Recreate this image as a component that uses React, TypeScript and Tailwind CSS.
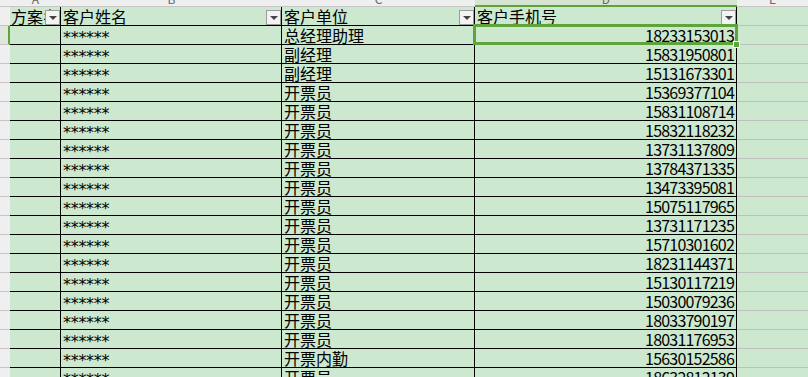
import React from 'react';

const rows: [string, string][] = [
  ['总经理助理', '18233153013'],
  ['副经理', '15831950801'],
  ['副经理', '15131673301'],
  ['开票员', '15369377104'],
  ['开票员', '15831108714'],
  ['开票员', '15832118232'],
  ['开票员', '13731137809'],
  ['开票员', '13784371335'],
  ['开票员', '13473395081'],
  ['开票员', '15075117965'],
  ['开票员', '13731171235'],
  ['开票员', '15710301602'],
  ['开票员', '18231144371'],
  ['开票员', '15130117219'],
  ['开票员', '15030079236'],
  ['开票员', '18033790197'],
  ['开票员', '18031176953'],
  ['开票内勤', '15630152586'],
  ['开票员', '18632812139'],
];

const grid = 'grid grid-cols-[10px_51px_221px_193px_262px_1fr]';
const cell = 'relative h-[19px] overflow-hidden whitespace-nowrap border-b border-black text-[16px] leading-[18px] text-black';

function Filter() {
  return (
    <span className="absolute right-0 top-[3px] flex h-[15px] w-[15px] items-center justify-center border border-[#9c9c9c] bg-[#f3f3f3]">
      <span className="h-0 w-0 border-x-[4px] border-t-[4px] border-x-transparent border-t-[#444]" />
    </span>
  );
}

export default function App() {
  return (
    <div
      className="relative h-[377px] w-[808px] overflow-hidden bg-[#cce8cf]"
      style={{fontFamily: '"Noto Sans CJK SC", "Liberation Sans", sans-serif'}}
    >
      {/* column letters */}
      <div className={`${grid} h-[7px] text-[12px] leading-[12px] text-[#666]`}>
        {['', 'A', 'B', 'C', 'D', 'E'].map((l, i) => (
          <div
            key={i}
            className={`h-[7px] overflow-hidden text-center ${
              i === 4
                ? 'border-b-2 border-[#5ea43b] bg-[#d6e4d2]'
                : 'border-b border-[#c6c6c6] bg-[#efefef]'
            }`}
          >
            <div className="-mt-[7px]">{l}</div>
          </div>
        ))}
      </div>

      {/* header row */}
      <div className={grid}>
        <div className="h-[19px] border-b border-[#c6c6c6] bg-[#efefef]" />
        <div className={`${cell} border-r pl-[1px]`}>
          方案名称
          <Filter />
        </div>
        <div className={`${cell} border-r pl-[2px]`}>
          客户姓名
          <Filter />
        </div>
        <div className={`${cell} border-r pl-[2px]`}>
          客户单位
          <Filter />
        </div>
        <div className={`${cell} border-r pl-[2px]`}>
          客户手机号
          <Filter />
        </div>
        <div className="h-[19px] border-b border-[#c0c0c0]" />
      </div>

      {rows.map(([unit, phone], i) => (
        <div key={i} className={grid}>
          <div
            className={`h-[19px] border-b border-[#c6c6c6] ${
              i === 0 ? 'border-r-2 border-r-[#5ea43b] bg-[#dde8da]' : 'bg-[#efefef]'
            }`}
          />
          <div className={`${cell} border-r`} />
          <div className={`${cell} border-r pl-[2px]`}>
            <span className="inline-block translate-y-[1px] font-['DejaVu_Sans'] text-[16px] tracking-[-0.3px]">
              ******
            </span>
          </div>
          <div className={`${cell} border-r pl-[2px]`}>{unit}</div>
          <div className={`${cell} border-r pr-[2px] text-right tracking-[-0.8px]`}>{phone}</div>
          <div className="h-[19px] border-b border-[#c0c0c0]" />
        </div>
      ))}

      {/* active cell D2 */}
      <div className="pointer-events-none absolute left-[473px] top-[24px] h-[21px] w-[265px] border-[3px] border-[#5ea43b]" />
      <div className="pointer-events-none absolute left-[733px] top-[41px] h-[7px] w-[7px] border border-white bg-[#5ea43b]" />
    </div>
  );
}
